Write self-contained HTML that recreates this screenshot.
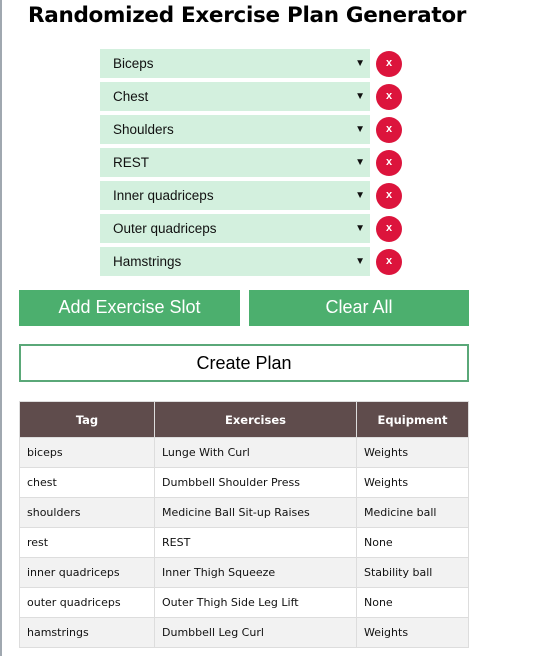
<!DOCTYPE html>
<html><head><style>
body{margin:0;width:539px;height:656px;background:#fff;position:relative;overflow:hidden;font-family:"Liberation Sans",sans-serif;}
.lb{position:absolute;left:0;top:0;width:2px;height:656px;background:#a0a8b0;}
h1{position:absolute;left:28px;top:1px;margin:0;font-family:"DejaVu Sans",sans-serif;font-weight:bold;font-size:21.5px;line-height:30px;color:#000;letter-spacing:-0.3px;}
.sel{position:absolute;left:100px;width:270px;height:29px;background:#d3f0de;font-size:13.5px;line-height:29px;}
.sel span{position:absolute;left:13px;color:#111;}
.sel i{position:absolute;right:5px;top:0;font-style:normal;font-size:10px;color:#111;}
.x{position:absolute;left:376px;width:26px;height:26px;border-radius:50%;background:#dc143c;color:#fff;font-size:11px;font-weight:bold;text-align:center;line-height:25px;}
.btn{position:absolute;top:290px;height:36px;background:#4caf6e;color:#fff;font-size:18px;line-height:34px;text-align:center;}
.cp{position:absolute;left:19px;top:344px;width:446px;height:34px;border:2px solid #5aa878;font-size:18px;line-height:34px;text-align:center;color:#000;}
table{position:absolute;left:19px;top:401px;width:450px;border-collapse:collapse;font-family:"DejaVu Sans",sans-serif;font-size:11px;}
th{background:#5f4c4c;color:#fff;height:35px;font-size:11.5px;border:1px solid #ddd;padding:0;}
td{height:29px;border:1px solid #ddd;padding:0 0 0 7px;color:#111;}
tr:nth-child(even) td{background:#f2f2f2;}
</style></head><body>
<div class="lb"></div>
<h1>Randomized Exercise Plan Generator</h1>
<div class="sel" style="top:49px"><span>Biceps</span><i>▼</i></div><div class="x" style="top:51px">x</div>
<div class="sel" style="top:82px"><span>Chest</span><i>▼</i></div><div class="x" style="top:84px">x</div>
<div class="sel" style="top:115px"><span>Shoulders</span><i>▼</i></div><div class="x" style="top:117px">x</div>
<div class="sel" style="top:148px"><span>REST</span><i>▼</i></div><div class="x" style="top:150px">x</div>
<div class="sel" style="top:181px"><span>Inner quadriceps</span><i>▼</i></div><div class="x" style="top:183px">x</div>
<div class="sel" style="top:214px"><span>Outer quadriceps</span><i>▼</i></div><div class="x" style="top:216px">x</div>
<div class="sel" style="top:247px"><span>Hamstrings</span><i>▼</i></div><div class="x" style="top:249px">x</div>
<div class="btn" style="left:19px;width:221px">Add Exercise Slot</div>
<div class="btn" style="left:249px;width:220px">Clear All</div>
<div class="cp">Create Plan</div>
<table>
<tr><th style="width:134px">Tag</th><th style="width:201px">Exercises</th><th>Equipment</th></tr>
<tr><td>biceps</td><td>Lunge With Curl</td><td>Weights</td></tr>
<tr><td>chest</td><td>Dumbbell Shoulder Press</td><td>Weights</td></tr>
<tr><td>shoulders</td><td>Medicine Ball Sit-up Raises</td><td>Medicine ball</td></tr>
<tr><td>rest</td><td>REST</td><td>None</td></tr>
<tr><td>inner quadriceps</td><td>Inner Thigh Squeeze</td><td>Stability ball</td></tr>
<tr><td>outer quadriceps</td><td>Outer Thigh Side Leg Lift</td><td>None</td></tr>
<tr><td>hamstrings</td><td>Dumbbell Leg Curl</td><td>Weights</td></tr>
</table>
</body></html>
